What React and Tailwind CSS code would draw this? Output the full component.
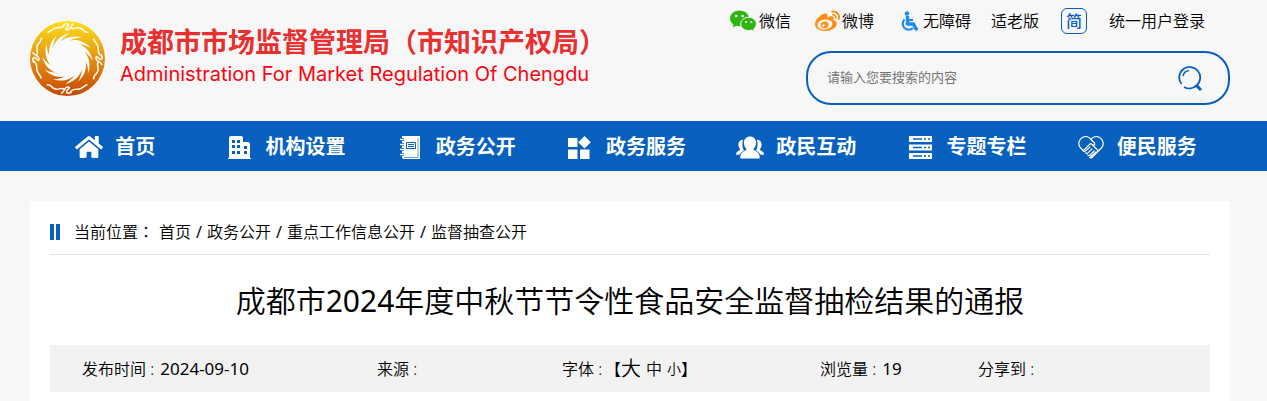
import React, { useState } from "react";
import { FaHome, FaWeibo } from "react-icons/fa";

const WechatIcon = () => (
  <svg width="27" height="22" viewBox="0 0 27 22" aria-hidden="true">
    <path
      d="M9.5 0.5C4.3 0.5 0 4 0 8.4c0 2.5 1.4 4.6 3.5 6.1L2.6 17.500l3.600-1.800c1 .3 2.200.5 3.300.5 5.200 0 9.500-3.500 9.500-7.800S14.700.5 9.500.5z"
      fill="#2fb50f"
    />
    <circle cx="6.300" cy="6" r="1.300" fill="#f7f7f7" />
    <circle cx="12.600" cy="6" r="1.300" fill="#f7f7f7" />
    <path
      d="M18.600 7.300c-4.400 0-7.900 2.900-7.900 6.600s3.500 6.600 7.900 6.600c1 0 1.900-.1 2.700-.4l3 1.500-.8-2.500c1.800-1.200 2.900-3.100 2.900-5.200 0-3.700-3.500-6.600-7.800-6.600z"
      fill="#2fb50f"
      stroke="#f7f7f7"
    />
    <circle cx="16" cy="12" r="1.100" fill="#f7f7f7" />
    <circle cx="21.300" cy="12" r="1.100" fill="#f7f7f7" />
  </svg>
);

const AccessibleIcon = () => (
  <svg width="19" height="21" viewBox="0 0 19 21" fill="none" stroke="#1c8cf5" aria-hidden="true">
    <circle cx="7" cy="2.500" r="2.300" fill="#1c8cf5" stroke="none" />
    <path d="M7.500 5v8h6l2.500 5" strokeWidth="3.500" strokeLinejoin="round" />
    <path d="M8 9h5" strokeWidth="2" />
    <path d="M4.500 8.500a6 6 0 1 0 8.500 8.500" strokeWidth="2.200" />
    <path d="M18 17.500l-3 1.500" strokeWidth="2" />
  </svg>
);

const BuildingIcon = () => (
  <svg width="23" height="23" viewBox="0 0 23 23" fill="currentColor" aria-hidden="true">
    <path
      fillRule="evenodd"
      d="M1 22V2a2 2 0 0 1 2-2h10a2 2 0 0 1 2 2v4h5a2 2 0 0 1 2 2v14h1v1H0v-1zM4 4v3h3V4zM9 4v3h3V4zM4 9v3h3V9zM9 9v3h3V9zM4 15v3h3v-3zM9 15v3h3v-3zM16 10v3h3v-3zM16 15v3h3v-3z"
    />
  </svg>
);

const NotebookIcon = () => (
  <svg width="20" height="23" viewBox="0 0 20 23" aria-hidden="true">
    <path d="M2 0h18v23H4a2 2 0 0 1-2-2z" fill="white" />
    <path d="M18 2v19.500H4" fill="none" stroke="#075fbe" strokeWidth="0.600" />
    <path d="M6.500 6.500h9v6h-9zM8 8.500h6M8 10.500h6" fill="none" stroke="#075fbe" />
    <path d="M0 3.500h4M0 8.500h4M0 13.500h4M0 18.500h4" stroke="#075fbe" strokeWidth="3" />
    <path d="M0 3.500h4M0 8.500h4M0 13.500h4M0 18.500h4" stroke="white" strokeWidth="1.500" />
  </svg>
);

const BlocksIcon = () => (
  <svg width="23" height="23" viewBox="0 0 23 23" fill="currentColor" aria-hidden="true">
    <path d="M0 2h9.500v9H0zM0 13.500h9.500V23H0zM12 13.500h9.500V23H12zM16.500 0l6.300 6.300-6.300 6.300-6.300-6.300z" />
  </svg>
);

const PeopleIcon = () => (
  <svg width="29" height="23" viewBox="0 0 29 23" fill="currentColor" aria-hidden="true">
    <path d="M14.500 0c3.800 0 6.300 2.700 6.300 6.500 0 2.600-1 5-2.600 6.600 0 2 5.800 2.500 6.300 7.400V23h-20v-2.500c.5-4.900 6.300-5.400 6.300-7.400-1.600-1.600-2.600-4-2.600-6.600C8.200 2.700 10.700 0 14.500 0z" />
    <path d="M7.500 3.500C4.300 3.500 2.500 5.500 2.500 8.500c0 2 .7 3.600 1.800 4.700C4 15 0 15 0 19h3.600c.8-2 2.300-3 4.700-4.500C6.800 12.500 6 8 7.500 3.500zM21.500 3.500c3.200 0 5 2 5 5 0 2-.7 3.600-1.800 4.700.3 1.800 4.300 1.800 4.300 5.800h-3.600c-.8-2-2.300-3-4.700-4.500 1.500-2 2.300-6.500.8-11z" />
  </svg>
);

const ServerIcon = () => (
  <svg width="23" height="23" viewBox="0 0 23 23" aria-hidden="true">
    <path d="M0 0h23v6H0zM0 8.500h23v6H0zM0 17h23v6H0z" fill="white" />
    <path
      d="M4 3h9M4 11.500h9M4 20h9M15 3h2M15 11.500h2M15 20h2M19 3h2M19 11.500h2M19 20h2"
      stroke="#075fbe"
      strokeWidth="1.500"
    />
  </svg>
);

const HeartIcon = () => (
  <svg
    width="26"
    height="23"
    viewBox="0 0 26 23"
    fill="none"
    stroke="currentColor"
    strokeWidth="1.200"
    strokeLinecap="round"
    strokeLinejoin="round"
    aria-hidden="true"
  >
    <path d="M13 3.500C11 .6 7.500 0 4.800 1.300.8 3.200-.4 8 2.200 11.500l3 3.200" />
    <path d="M13 3.500c2-2.900 5.500-3.500 8.200-2.200 4 1.900 5.200 6.700 2.600 10.200L14 21.500c-.8.700-1.600.5-2 0" />
    <path d="M13 3.500 16.500 7c1 1.300-.6 2.800-2 1.800L12.500 7.500 5.200 14.700" />
    <path d="M5.200 14.700c.6 1.200 1.800.8 2.400.2L12 11M7.600 16.700c.6 1 1.800.8 2.400.2l4-4M9.800 19c.6 1 1.800.6 2.400 0l4-4M12 21.500l6-5.500M14.500 9l5.500 5.500" />
  </svg>
);

const SearchIcon = () => (
  <svg width="24" height="25" viewBox="0 0 24 25" fill="none" stroke="#075fbe" strokeWidth="1.800" aria-hidden="true">
    <path d="M3.500 18A10.500 10.500 0 1 1 18.500 19.500A10.500 10.500 0 0 1 6 21" />
    <path d="M5 10a7 7 0 0 1 6-5.500" strokeWidth="1.500" />
    <path d="M18 19l5 5" strokeWidth="3" />
  </svg>
);

const rays = [0, 30, 60, 90, 120, 150, 180, 210, 240, 270, 300, 330];
const birds = [0, 90, 180, 270];

const Logo = () => (
  <svg width="75" height="75" viewBox="-50 -50 100 100" className="shrink-0" aria-hidden="true">
    <defs>
      <linearGradient id="gold" x1="0" y1="0" x2="0" y2="1">
        <stop offset="0" stopColor="#fde019" />
        <stop offset="0.5" stopColor="#e39212" />
        <stop offset="1" stopColor="#c64703" />
      </linearGradient>
    </defs>
    <circle r="50" fill="url(#gold)" />
    <circle r="21" fill="#fafafa" />
    {rays.map((deg) => (
      <path key={deg} transform={`rotate(${deg})`} d="M-20 -8C-20 -20 -12 -30 3 -34C-6 -28 -11 -22 -10 -15z" fill="#fafafa" />
    ))}
    {birds.map((deg) => (
      <g key={deg} transform={`rotate(${deg})`} fill="none" stroke="#fafafa" strokeWidth="2" strokeLinecap="round">
        <path d="M-26 -35C-22 -36 -19 -41 -14 -41S-8 -40 -4 -44" />
        <path d="M-5 -45C0 -48 3 -45 0 -42S-4 -38 0 -38S4 -45 8 -46" />
        <path d="M4 -41C9 -38 13 -43 18 -40S23 -34 27 -35" />
      </g>
    ))}
  </svg>
);

const navItems = [
  { label: "首页", icon: <FaHome size={28} /> },
  { label: "机构设置", icon: <BuildingIcon /> },
  { label: "政务公开", icon: <NotebookIcon /> },
  { label: "政务服务", icon: <BlocksIcon /> },
  { label: "政民互动", icon: <PeopleIcon /> },
  { label: "专题专栏", icon: <ServerIcon /> },
  { label: "便民服务", icon: <HeartIcon /> },
];

const crumbs = ["首页", "政务公开", "重点工作信息公开", "监督抽查公开"];

const Header = () => {
  const [keyword, setKeyword] = useState("");

  return (
    <header className="flex justify-between pl-[30px] pr-[37px] h-[121px]">
      <a href="#" className="flex items-center gap-[15px] pb-1">
        <Logo />
        <div className="whitespace-nowrap pb-0.5">
          <div className="text-[27px] leading-8 font-bold text-[#e83030]">成都市市场监督管理局（市知识产权局）</div>
          <div className="font-['Inter','Liberation_Sans',sans-serif] font-normal text-[20px] leading-8 text-[#fb0410]">
            Administration For Market Regulation Of Chengdu
          </div>
        </div>
      </a>

      <div className="w-[424px] shrink-0 pt-2">
        <div className="flex items-center justify-end pr-[25px] -ml-20 h-[26px] whitespace-nowrap">
          <a href="#" className="flex items-center gap-0.5 mr-6">
            <WechatIcon />
            微信
          </a>
          <a href="#" className="flex items-center gap-0.5 mr-[26px]">
            <FaWeibo size={25} color="#ff8c0a" />
            微博
          </a>
          <a href="#" className="flex items-center gap-1 mr-5">
            <AccessibleIcon />
            无障碍
          </a>
          <a href="#" className="mr-[22px]">适老版</a>
          <button className="w-[26px] h-[26px] mr-[22px] rounded-md border border-[#075fbe] text-[#075fbe] font-medium leading-6">
            简
          </button>
          <a href="#">统一用户登录</a>
        </div>

        <form
          className="mt-[17px] flex items-center h-[54px] rounded-[25px] border-2 border-[#075fbe] pl-[19px] pr-[26px]"
          onSubmit={(e) => e.preventDefault()}
        >
          <input
            type="text"
            aria-label="搜索"
            placeholder="请输入您要搜索的内容"
            value={keyword}
            onChange={(e) => setKeyword(e.target.value)}
            className="flex-1 min-w-0 bg-transparent text-[13px] font-normal outline-none placeholder:text-[#757575]"
          />
          <button type="submit" aria-label="搜索">
            <SearchIcon />
          </button>
        </form>
      </div>
    </header>
  );
};

const App = () => {
  return (
    <div className="min-h-screen flex flex-col bg-[#f7f7f7] text-base font-[350] text-black font-['Noto_Sans','Noto_Sans_CJK_SC',sans-serif]">
      <Header />

      <nav className="bg-[#075fbe] pl-[30px] pr-[45px]">
        <ul className="grid grid-cols-7">
          {navItems.map((item) => (
            <li key={item.label}>
              <a
                href="#"
                className="flex items-center justify-center gap-3 h-[50px] pt-0.5 text-xl font-bold text-white whitespace-nowrap"
              >
                <span className="flex justify-center w-7">{item.icon}</span>
                {item.label}
              </a>
            </li>
          ))}
        </ul>
      </nav>

      <main className="grow mt-[30px] ml-[30px] mr-[37px] px-5 bg-white">
        <div className="flex items-center h-[54px] pt-2 border-b border-[#e5e5e5]">
          <span className="w-[10px] h-4 border-x-4 border-[#075fbe] mr-[14px]" />
          <span className="mr-[5px]">
            当前位置<span className="font-['Noto_Sans_CJK_TC',sans-serif]">：</span>
          </span>
          {crumbs.map((crumb, index) => (
            <span key={crumb}>
              {index > 0 && <span className="mx-[5px] font-normal">/</span>}
              <a href="#">{crumb}</a>
            </span>
          ))}
        </div>

        <h1 className="pt-[23px] pb-[22px] text-center text-[30px] leading-[45px]">
          成都市<span className="font-normal">2024</span>年度中秋节节令性食品安全监督抽检结果的通报
        </h1>

        <div className="grid grid-cols-[295fr_185fr_258fr_158fr_232fr] items-center h-[47px] pl-8 bg-[#f2f2f2] whitespace-nowrap">
          <span>
            发布时间 : <span className="ml-0.5 text-[17px] font-normal">2024-09-10</span>
          </span>
          <span>来源 :</span>
          <span className="flex items-center">
            <span className="mr-[3px]">字体 :</span>
            【
            <button className="text-xl">大</button>
            <button className="mx-[5px]">中</button>
            <button className="text-sm">小</button>
            】
          </span>
          <span>
            浏览量 : <span className="ml-0.5 text-[17px] font-normal">19</span>
          </span>
          <span>分享到 :</span>
        </div>
      </main>
    </div>
  );
};

export default App;
